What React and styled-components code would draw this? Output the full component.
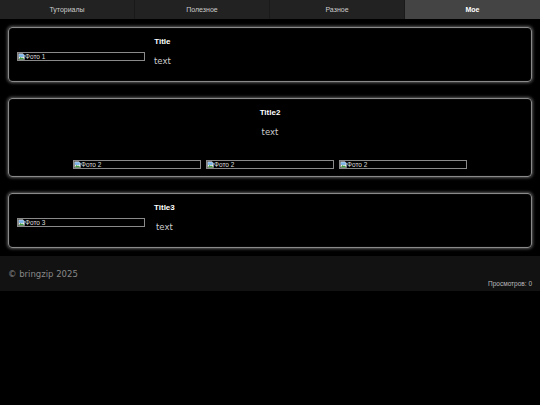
import React from "react";
import styled, { createGlobalStyle } from "styled-components";

const GlobalStyle = createGlobalStyle`
  html, body {
    margin: 0;
    padding: 0;
    background-color: #000;
    font-family: "Liberation Sans", Arial, sans-serif;
  }
`;

const Nav = styled.nav`
  display: grid;
  grid-template-columns: repeat(4, 1fr);
  height: 19px;
  background-color: #222;
`;

const NavItem = styled.div`
  display: flex;
  align-items: center;
  justify-content: center;
  font-size: 7px;
  color: ${(props) => (props.$active ? "#fff" : "#ccc")};
  font-weight: ${(props) => (props.$active ? "bold" : "normal")};
  background-color: ${(props) => (props.$active ? "#444" : "transparent")};
  border-right: 1px solid #1a1a1a;

  &:last-child {
    border-right: none;
  }
`;

const Main = styled.main`
  display: flex;
  flex-direction: column;
  gap: 16px;
  padding: 8px;
`;

const Card = styled.section`
  border: 1px solid #8a8a8a;
  border-radius: 4px;
  box-shadow: 0 0 3px 1px #5a5a5a, inset 0 0 1px #555;
  padding: ${(props) => (props.$stacked ? "9px 8px 7px" : "9px 8px 6px")};
  display: flex;
  flex-direction: ${(props) => (props.$stacked ? "column" : "row")};
  align-items: center;
  gap: 9px;
`;

const TextCol = styled.div`
  display: flex;
  flex-direction: column;
  align-items: center;
  padding-bottom: 8px;
`;

const Title = styled.h3`
  margin: 0 0 9px;
  font-size: 8px;
  line-height: 10px;
  font-weight: bold;
  color: #fff;
`;

const Text = styled.p`
  margin: 0;
  font-family: "DejaVu Sans", Verdana, sans-serif;
  font-size: 8.5px;
  line-height: 11px;
  color: #ccc;
`;

const Gallery = styled.div`
  display: flex;
  justify-content: center;
  gap: 5px;
  margin-top: 5px;
`;

const Broken = styled.span`
  display: inline-flex;
  align-items: center;
  box-sizing: border-box;
  width: 128px;
  height: 9px;
  border: 1px solid #8a8a8a;
  font-size: 6.5px;
  line-height: 7px;
  color: #ddd;
  overflow: hidden;
  white-space: nowrap;
`;

const Footer = styled.footer`
  background-color: #121212;
  padding: 12px 8px 3px;
`;

const Copy = styled.div`
  font-family: "DejaVu Sans", Verdana, sans-serif;
  font-size: 8.5px;
  line-height: 12px;
  color: #888;
`;

const Views = styled.div`
  text-align: right;
  font-size: 6.5px;
  line-height: 8px;
  color: #bbb;
`;

const BrokenIcon = () => (
  <svg width="7" height="7" viewBox="0 0 16 16" style={{ flexShrink: 0 }}>
    <path d="M1 1h10l4 4v10H1z" fill="#eee" stroke="#999" strokeWidth="1" />
    <rect x="2" y="3" width="11" height="6" fill="#7ab4e8" />
    <path d="M2 14l4-5 3 3 2-2 3 4z" fill="#3a9a3a" />
  </svg>
);

const Photo = ({ alt }) => (
  <Broken>
    <BrokenIcon />
    {alt}
  </Broken>
);

const tabs = ["Туториалы", "Полезное", "Разное", "Мое"];

export default function App() {
  return (
    <>
      <GlobalStyle />
      <Nav>
        {tabs.map((t) => (
          <NavItem key={t} $active={t === "Мое"}>
            {t}
          </NavItem>
        ))}
      </Nav>
      <Main>
        <Card>
          <Photo alt="Фото 1" />
          <TextCol>
            <Title>Title</Title>
            <Text>text</Text>
          </TextCol>
        </Card>
        <Card $stacked>
          <TextCol>
            <Title>Title2</Title>
            <Text>text</Text>
          </TextCol>
          <Gallery>
            <Photo alt="Фото 2" />
            <Photo alt="Фото 2" />
            <Photo alt="Фото 2" />
          </Gallery>
        </Card>
        <Card>
          <Photo alt="Фото 3" />
          <TextCol>
            <Title>Title3</Title>
            <Text>text</Text>
          </TextCol>
        </Card>
      </Main>
      <Footer>
        <Copy>© bringzip 2025</Copy>
        <Views>Просмотров: 0</Views>
      </Footer>
    </>
  );
}
